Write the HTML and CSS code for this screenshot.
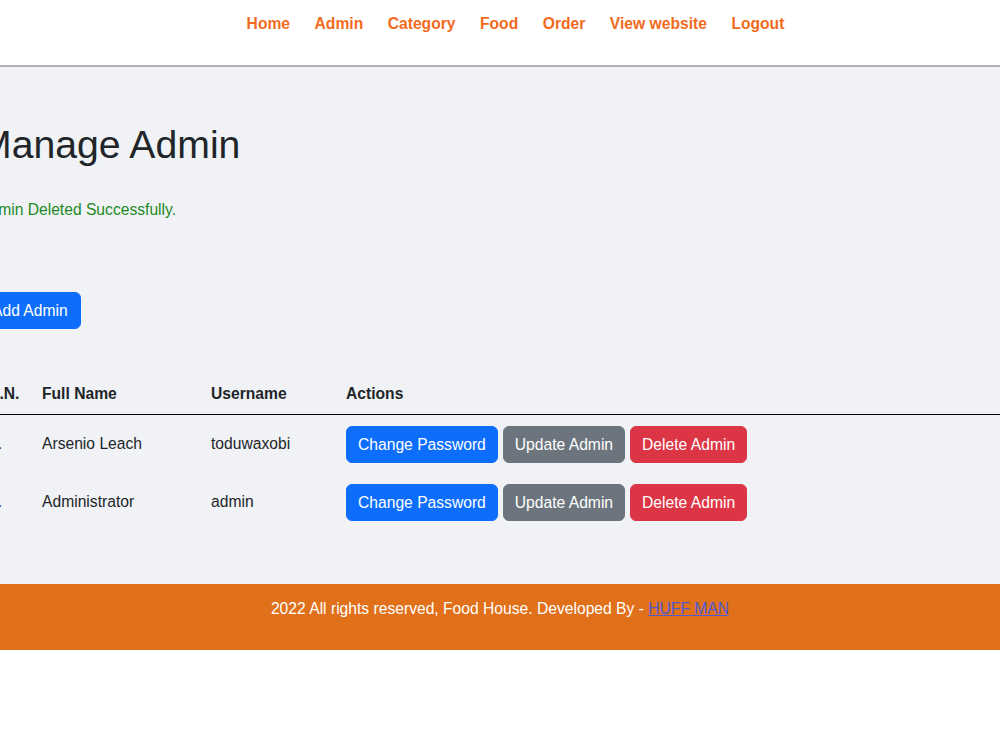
FILE: index.html
```html
<!DOCTYPE html>
<html lang="en">
<head>
<meta charset="utf-8">
<title>Food House - Manage Admin</title>
<link rel="stylesheet" href="styles.css">
</head>
<body>
<header class="menu">
  <nav>
    <ul class="menu-list">
      <li><a href="#">Home</a></li>
      <li><a href="#">Admin</a></li>
      <li><a href="#">Category</a></li>
      <li><a href="#">Food</a></li>
      <li><a href="#">Order</a></li>
      <li><a href="#">View website</a></li>
      <li><a href="#">Logout</a></li>
    </ul>
  </nav>
</header>
<main class="main-content">
  <div class="wrapper">
    <h1 class="title">Manage Admin</h1>
    <p class="success">Admin Deleted Successfully.</p>
    <a href="#" class="btn btn-primary add-btn">Add Admin</a>
    <table class="tbl-full">
      <thead>
        <tr><th class="col-sn">S.N.</th><th class="col-name">Full Name</th><th class="col-user">Username</th><th>Actions</th></tr>
      </thead>
      <tbody>
        <tr>
          <td class="sn">1.</td><td>Arsenio Leach</td><td>toduwaxobi</td>
          <td class="actions"><a href="#" class="btn btn-primary">Change Password</a><a href="#" class="btn btn-secondary">Update Admin</a><a href="#" class="btn btn-danger">Delete Admin</a></td>
        </tr>
        <tr>
          <td class="sn">2.</td><td>Administrator</td><td>admin</td>
          <td class="actions"><a href="#" class="btn btn-primary">Change Password</a><a href="#" class="btn btn-secondary">Update Admin</a><a href="#" class="btn btn-danger">Delete Admin</a></td>
        </tr>
      </tbody>
    </table>
  </div>
</main>
<footer class="footer">
  <p>2022 All rights reserved, Food House. Developed By - <a href="#">HUFF MAN</a></p>
</footer>
</body>
</html>
```

FILE: styles.css
```css
* { box-sizing: border-box; }
html, body { overflow: hidden; }
body {
  margin: 0;
  font-family: "Liberation Sans", Arial, sans-serif;
  font-size: 15.65px;
  line-height: 24px;
  color: #212529;
  background: #ffffff;
}
a { text-decoration: none; }

.menu {
  background: #ffffff;
  padding: 12px 0 29px;
  border-bottom: 2px solid #b3b3b3;
}
.menu-list {
  list-style: none;
  margin: 0;
  padding: 0 0 0 31px;
  display: flex;
  justify-content: center;
  gap: 24.5px;
}
.menu-list a {
  color: #f26b1d;
  font-weight: bold;
}

.main-content {
  background: #f0f2f5;
  padding: 54px 0 53px;
}
.wrapper {
  margin-left: -21px;
  width: 1060px;
}
.title {
  margin: 0 0 8px;
  font-size: 39.2px;
  line-height: 48px;
  font-weight: 500;
}
.success {
  color: #1f8a1f;
  margin: 29px 0 70px;
}
.btn {
  display: inline-block;
  padding: 6px 11px;
  border-radius: 6px;
  color: #ffffff;
  font-size: 15.65px;
  line-height: 23px;
  border: 1px solid transparent;
}
.add-btn { padding: 6px 12px; }
.btn-primary { background: #0d6efd; border-color: #0d6efd; }
.btn-secondary { background: #6c757d; border-color: #6c757d; }
.btn-danger { background: #dc3545; border-color: #dc3545; }

.tbl-full {
  width: 100%;
  border-collapse: collapse;
  margin-top: 44px;
}
.tbl-full th {
  text-align: left;
  font-weight: bold;
  padding: 9px 8px 8px;
  border-bottom: 1px solid #000000;
}
.tbl-full td {
  padding: 10.5px 8px;
  vertical-align: middle;
}
.tbl-full .col-sn, .tbl-full .sn { padding-left: 10px; }
.col-sn { width: 55px; }
.col-name { width: 169px; }
.col-user { width: 135px; }
.actions { display: flex; gap: 5px; }

.footer {
  background: #e07019;
  color: #ffffff;
  text-align: center;
  padding: 13px 0 13px;
}
.footer p { margin: 0 0 16px; }
.footer a {
  color: #4f5bd5;
  text-decoration: underline;
}
```
